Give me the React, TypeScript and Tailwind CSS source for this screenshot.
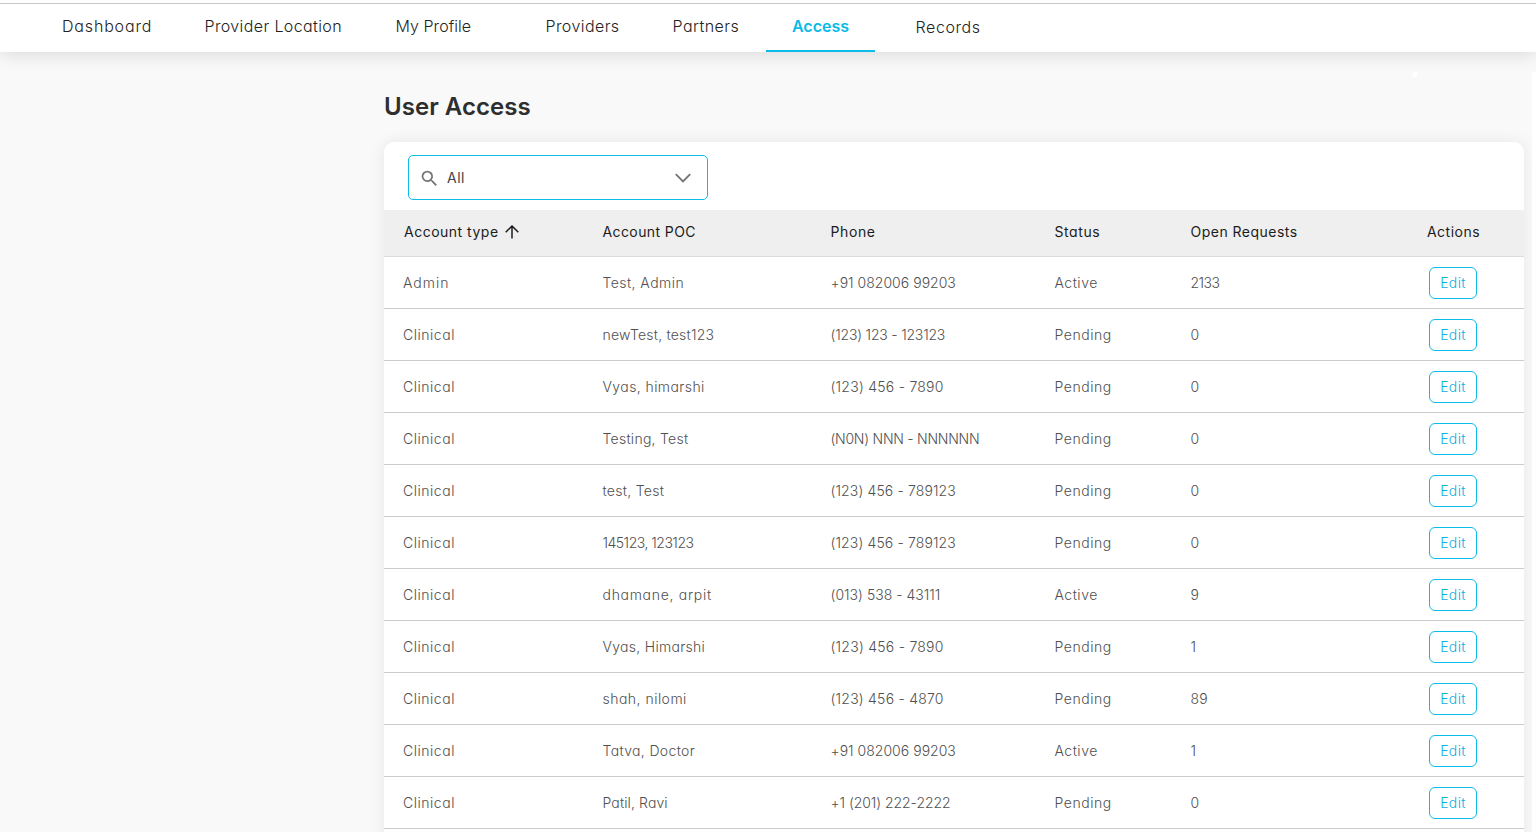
type Label = [text: string, tracking: string];

type NavItem = { label: string; className: string; active?: boolean };

const NAV: NavItem[] = [
  { label: 'Dashboard', className: 'ml-[62px] w-[142.5px] tracking-[0.83px]' },
  { label: 'Provider Location', className: 'w-[191px] tracking-[0.38px]' },
  { label: 'My Profile', className: 'w-[150px] tracking-[0.05px]' },
  { label: 'Providers', className: 'w-[127px] tracking-[0.42px]' },
  { label: 'Partners', className: 'w-[93.5px] tracking-[0.44px]' },
  { label: 'Access', className: 'w-[109px]', active: true },
  { label: 'Records', className: 'ml-[40.5px] pt-px tracking-[0.6px]' },
];

const GRID = 'grid grid-cols-[199.5px_228px_224px_136px_1fr] pl-[19px]';

const HEADERS: Label[] = [
  ['Account POC', 'tracking-[0.4px]'],
  ['Phone', 'tracking-[0.6px]'],
  ['Status', 'tracking-[0.58px]'],
];

const ADMIN: Label = ['Admin', 'tracking-[1px]'];
const CLINICAL: Label = ['Clinical', 'tracking-[0.52px]'];
const ACTIVE: Label = ['Active', 'tracking-[0.5px]'];
const PENDING: Label = ['Pending', 'tracking-[0.56px]'];
const ZERO: Label = ['0', 'tracking-normal'];
const ONE: Label = ['1', 'tracking-normal'];
const INDIA: Label = ['+91 082006 99203', 'tracking-[0.02px]'];
const US_10: Label = ['(123) 456 - 7890', 'tracking-[0.24px]'];
const US_12: Label = ['(123) 456 - 789123', 'tracking-[0.12px]'];

const ROWS: Label[][] = [
  [ADMIN, ['Test, Admin', 'tracking-[0.44px]'], INDIA, ACTIVE, ['2133', 'tracking-[-0.5px]']],
  [CLINICAL, ['newTest, test123', 'tracking-[0.22px]'], ['(123) 123 - 123123', 'tracking-[-0.2px]'], PENDING, ZERO],
  [CLINICAL, ['Vyas, himarshi', 'tracking-[0.42px]'], US_10, PENDING, ZERO],
  [CLINICAL, ['Testing, Test', 'tracking-[0.26px]'], ['(N0N) NNN - NNNNNN', 'tracking-[-0.26px]'], PENDING, ZERO],
  [CLINICAL, ['test, Test', 'tracking-[0.28px]'], US_12, PENDING, ZERO],
  [CLINICAL, ['145123, 123123', 'tracking-[-0.5px]'], US_12, PENDING, ZERO],
  [CLINICAL, ['dhamane, arpit', 'tracking-[0.7px]'], ['(013) 538 - 43111', 'tracking-[0.01px]'], ACTIVE, ['9', 'tracking-normal']],
  [CLINICAL, ['Vyas, Himarshi', 'tracking-[0.29px]'], US_10, PENDING, ONE],
  [CLINICAL, ['shah, nilomi', 'tracking-[0.48px]'], ['(123) 456 - 4870', 'tracking-[0.22px]'], PENDING, ['89', 'tracking-[0.3px]']],
  [CLINICAL, ['Tatva, Doctor', 'tracking-[0.34px]'], INDIA, ACTIVE, ONE],
  [CLINICAL, ['Patil, Ravi', 'tracking-[0.12px]'], ['+1 (201) 222-2222', 'tracking-[-0.06px]'], PENDING, ZERO],
];

function TopNav() {
  return (
    <header className="relative z-10 h-[52px] shrink-0 bg-white pt-[3px] shadow-[0_4px_16px_rgba(0,0,0,0.11)]">
      <nav className="flex h-[49px] border-t border-[#c8c8c8] text-base leading-6 font-light text-[#222]">
        {NAV.map(({ label, className, active }) => (
          <a
            key={label}
            className={
              (active
                ? 'flex justify-center border-b-2 border-[#0bbbe8] font-semibold text-[#0bbbe8] '
                : 'flex whitespace-nowrap ') + className
            }
          >
            <span className="mt-[10px]">{label}</span>
          </a>
        ))}
      </nav>
    </header>
  );
}

function AccountFilter() {
  return (
    <button className="flex h-[45px] w-[300px] items-center rounded-[5px] border border-[#0bbbe8] pl-[10px] pr-[16px] text-sm font-normal text-[#444]">
      <svg className="mt-px size-[21px] text-[#757575]" viewBox="0 0 24 24" fill="currentColor">
        <path d="M15.5 14h-.79l-.28-.27A6.47 6.47 0 0 0 16 9.5 6.5 6.5 0 1 0 9.5 16c1.61 0 3.09-.59 4.23-1.57l.27.28v.79l5 4.99L20.49 19l-4.99-5zm-6 0C7.01 14 5 11.99 5 9.5S7.01 5 9.5 5 14 7.01 14 9.5 11.99 14 9.5 14z" />
      </svg>
      <span className="ml-[7px] tracking-[0.5px]">All</span>
      <svg className="ml-auto h-[10px] w-[16px] text-[#757575]" viewBox="0 0 16 10" fill="none" stroke="currentColor" strokeWidth="1.9">
        <path d="M.8 1.2 8 8.4l7.2-7.2" />
      </svg>
    </button>
  );
}

function TableHeader() {
  return (
    <div className={GRID + ' h-[47px] items-center border-b border-[#dcdcdc] bg-[#efefef] pb-[2px] font-normal text-[#1c1c1c]'}>
      <div className="flex items-center pl-px">
        <span className="w-[94px] tracking-[0.5px] whitespace-nowrap">Account type</span>
        <svg className="ml-[7px] size-[14px]" viewBox="0 0 14 14" fill="none" stroke="currentColor" strokeWidth="1.5">
          <path d="M7 13.5V1.2M.7 7.3 7 1l6.3 6.3" />
        </svg>
      </div>
      {HEADERS.map(([text, tracking]) => (
        <div key={text} className={tracking}>{text}</div>
      ))}
      <div className="flex justify-between pr-[44px]">
        <span className="tracking-[0.48px]">Open Requests</span>
        <span className="tracking-[0.48px]">Actions</span>
      </div>
    </div>
  );
}

function TableRow({ cells }: { cells: Label[] }) {
  const [requests, requestsTracking] = cells[4];
  return (
    <div className={GRID + ' h-[52px] items-center border-b border-[#cbcbcb] text-[#505050]'}>
      {cells.slice(0, 4).map(([text, tracking], i) => (
        <div key={i} className={tracking}>{text}</div>
      ))}
      <div className="flex items-center justify-between pr-[47px]">
        <span className={requestsTracking}>{requests}</span>
        <button className="mt-px flex h-8 w-12 items-center justify-center rounded-[6px] border border-[#0bbbe8] tracking-[0.35px] text-[#0bb0e0]">
          Edit
        </button>
      </div>
    </div>
  );
}

export default function App() {
  return (
    <div className="flex h-[832px] w-[1536px] flex-col overflow-hidden bg-white font-['Inter',sans-serif] [font-feature-settings:'cv11']">
      <TopNav />
      <div className="flex min-h-0 flex-1">
        <main className="w-[1532px] overflow-hidden bg-[#f9f9f9] pl-[384px] pr-[8px]">
          <h1 className="mt-[39px] text-2xl leading-8 font-semibold tracking-[0.05px] text-[#2e2e2e]">User Access</h1>
          <section className="mt-[19px] h-[800px] rounded-[10px] bg-white text-sm leading-5 font-light shadow-[0_0_16px_rgba(0,0,0,0.08)]">
            <div className="px-[24px] pt-[13px] pb-[10px]">
              <AccountFilter />
            </div>
            <TableHeader />
            {ROWS.map((cells, i) => (
              <TableRow key={i} cells={cells} />
            ))}
          </section>
        </main>
        <div className="h-5 w-1 bg-[#f9f9f9]" />
      </div>
      <div className="absolute top-[72px] left-[1413px] h-[5px] w-1 bg-white" />
    </div>
  );
}
